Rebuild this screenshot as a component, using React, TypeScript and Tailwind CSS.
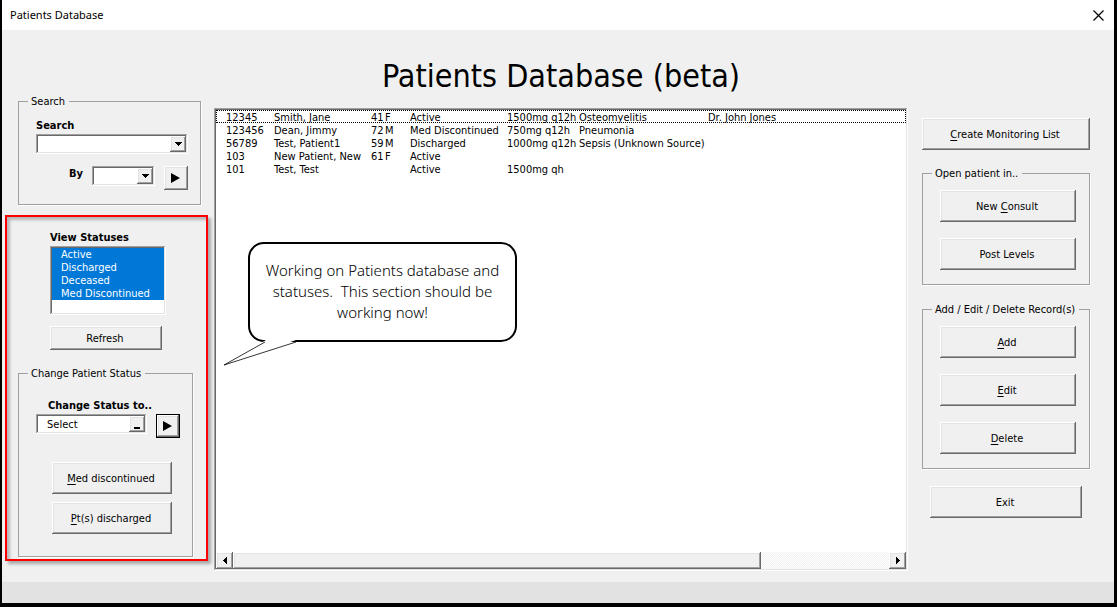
import type { ReactNode } from "react";

const raised =
  "bg-[#f0f0f0] shadow-[inset_-1px_-1px_0_#696969,inset_1px_1px_0_#fff,inset_-2px_-2px_0_#a0a0a0,inset_2px_2px_0_#e3e3e3]";
const sunken =
  "bg-white p-[2px] shadow-[inset_-1px_-1px_0_#fff,inset_1px_1px_0_#a0a0a0,inset_-2px_-2px_0_#e3e3e3,inset_2px_2px_0_#696969]";

function Key({ children }: { children: ReactNode }) {
  return <span className="underline underline-offset-2">{children}</span>;
}

function Button({ children, className = "h-8 w-full" }: { children: ReactNode; className?: string }) {
  return (
    <button type="button" className={`block pt-[2px] pr-[2px] text-center ${raised} ${className}`}>
      {children}
    </button>
  );
}

function Group({ title, className, children }: { title: string; className: string; children: ReactNode }) {
  return (
    <fieldset className={`min-w-0 border border-[#a0a0a0] pl-[17px] shadow-[1px_1px_0_#fff] ${className}`}>
      <legend className="-ml-2 h-[14px] whitespace-nowrap bg-[#f0f0f0] pr-1 pl-[3px] leading-4">{title}</legend>
      {children}
    </fieldset>
  );
}

function DownArrow() {
  return (
    <svg width="7" height="4" viewBox="0 0 7 4" shapeRendering="crispEdges" aria-hidden="true">
      <path d="M0 0h7v1H6v1H5v1H4v1H3V3H2V2H1V1H0z" />
    </svg>
  );
}

function PlayButton({ label, isDefault = false }: { label: string; isDefault?: boolean }) {
  return (
    <div className={`size-6 shrink-0 ${isDefault ? "bg-black p-px" : ""}`}>
      <button type="button" aria-label={label} className={`flex size-full items-center justify-center ${raised}`}>
        <svg width="10" height="10" viewBox="0 0 10 10" aria-hidden="true">
          <path d="M0 0L9 5L0 10z" />
        </svg>
      </button>
    </div>
  );
}

function ScrollArrow({ direction }: { direction: "left" | "right" }) {
  return (
    <button
      type="button"
      aria-label={`Scroll ${direction}`}
      className={`flex w-[17px] shrink-0 items-center justify-center ${raised}`}
    >
      <svg width="4" height="7" viewBox="0 0 4 7" shapeRendering="crispEdges" aria-hidden="true">
        <path d={direction === "left" ? "M4 0v7H3V6H2V5H1V4H0V3H1V2H2V1H3V0z" : "M0 0v7H1V6H2V5H3V4H4V3H3V2H2V1H1V0z"} />
      </svg>
    </button>
  );
}

const patients = [
  ["12345", "Smith, Jane", "41", "F", "Active", "1500mg q12h", "Osteomyelitis", "Dr. John Jones"],
  ["123456", "Dean, Jimmy", "72", "M", "Med Discontinued", "750mg q12h", "Pneumonia", ""],
  ["56789", "Test, Patient1", "59", "M", "Discharged", "1000mg q12h", "Sepsis (Unknown Source)", ""],
  ["103", "New Patient, New", "61", "F", "Active", "", "", ""],
  ["101", "Test, Test", "", "", "Active", "1500mg qh", "", ""],
];

const statuses = ["Active", "Discharged", "Deceased", "Med Discontinued"];

function SearchPanel() {
  return (
    <Group title="Search" className="mr-[11px] ml-4 pt-[10px] pb-[14px]">
      <label htmlFor="search" className="block font-bold leading-4">
        Search
      </label>
      <div className={`mr-3 flex h-5 ${sunken}`}>
        <input id="search" className="min-w-0 flex-1 px-1 outline-none" />
        <button type="button" aria-label="Show searches" className={`flex w-4 items-center justify-center ${raised}`}>
          <DownArrow />
        </button>
      </div>
      <div className="mt-3 mr-3 flex items-start justify-end">
        <label htmlFor="by" className="mr-[9px] font-bold leading-4">
          By
        </label>
        <div className={`mr-[9px] flex h-5 w-[63px] ${sunken}`}>
          <input id="by" className="min-w-0 flex-1 px-1 outline-none" />
          <button type="button" aria-label="Show fields" className={`flex w-4 items-center justify-center ${raised}`}>
            <DownArrow />
          </button>
        </div>
        <PlayButton label="Run search" />
      </div>
    </Group>
  );
}

function StatusPanel() {
  return (
    <section className="mt-[10px] mr-1 ml-[3px] border-2 border-[#f00] pt-[13px] pb-[2px] shadow-[3px_3px_3px_#a8a8a8,inset_3px_3px_3px_#b8b8b8]">
      <div className="mr-10 ml-[43px]">
        <label htmlFor="statuses" className="block font-bold leading-4">
          View Statuses
        </label>
        <div className={`h-[69px] w-[116px] ${sunken}`}>
          <select
            id="statuses"
            multiple
            defaultValue={statuses}
            className="block size-full appearance-none overflow-hidden outline-none"
          >
            {statuses.map((s) => (
              <option
                key={s}
                className="h-[13px] min-h-0 bg-[linear-gradient(#0078d7,#0078d7)] p-0 pl-[9px] leading-[15px] [-webkit-text-fill-color:#fff]"
              >
                {s}
              </option>
            ))}
          </select>
        </div>
        <Button className="mt-[11px] h-6 w-28">Refresh</Button>
      </div>
      <Group title="Change Patient Status" className="mt-4 mr-[13px] ml-[11px] pt-[18px] pb-[22px]">
        <label htmlFor="change" className="ml-3 block font-bold leading-4">
          Change Status to..
        </label>
        <div className="mr-3 flex items-start gap-[9px]">
          <div className={`flex h-5 min-w-0 flex-1 ${sunken}`}>
            <select id="change" className="min-w-0 flex-1 appearance-none pt-[2px] pl-[9px] outline-none">
              <option>Select</option>
            </select>
            <span className={`flex w-4 items-end justify-center pb-[3px] ${raised}`}>
              <span className="h-[2px] w-[6px] bg-black" />
            </span>
          </div>
          <PlayButton label="Apply status" isDefault />
        </div>
        <div className="mt-6 mr-5 ml-4 flex flex-col gap-2">
          <Button>
            <Key>M</Key>ed discontinued
          </Button>
          <Button>
            <Key>P</Key>t(s) discharged
          </Button>
        </div>
      </Group>
    </section>
  );
}

function Callout() {
  return (
    <div className="absolute top-[134px] left-[34px] flex h-[100px] w-[269px] items-center justify-center rounded-2xl border-2 border-black bg-white pb-[2px]">
      <p className="text-center font-['Noto_Sans','Open_Sans',sans-serif] text-[15px] leading-[21px] font-light whitespace-pre">
        {"Working on Patients database and\nstatuses.  This section should be\nworking now!"}
      </p>
      <svg className="absolute top-[95px] -left-[27px]" width="76" height="28" viewBox="0 0 76 28" aria-hidden="true">
        <path d="M43 1L1 26L73 1z" fill="#fff" />
        <path d="M42 3L1 26L73 3" fill="none" stroke="#000" strokeWidth="0.8" />
      </svg>
    </div>
  );
}

function PatientList() {
  return (
    <div className={`relative flex flex-1 flex-col ${sunken}`}>
      <table className="w-full table-fixed border-collapse leading-[15px]">
        <colgroup>
          <col className="w-[58px]" />
          <col className="w-[97px]" />
          <col className="w-[14px]" />
          <col className="w-[25px]" />
          <col className="w-[97px]" />
          <col className="w-[72px]" />
          <col className="w-[129px]" />
          <col />
        </colgroup>
        <tbody>
          {patients.map((row, r) => (
            <tr key={row[0]} className={r === 0 ? "outline-1 -outline-offset-1 outline-black outline-dotted" : ""}>
              {row.map((cell, c) => (
                <td key={c} className={c === 0 ? "p-0 pl-[10px]" : "p-0"}>
                  <div className="h-[13px] whitespace-nowrap">{cell}</div>
                </td>
              ))}
            </tr>
          ))}
        </tbody>
      </table>
      <div className="mt-auto flex h-[17px] bg-[repeating-conic-gradient(#f0f0f0_0_25%,#fff_0_50%)] bg-[length:2px_2px]">
        <ScrollArrow direction="left" />
        <div className="flex flex-1">
          <div className={`w-[80.5%] ${raised}`} />
        </div>
        <ScrollArrow direction="right" />
      </div>
      <Callout />
    </div>
  );
}

function Actions() {
  return (
    <div className="pt-[88px] pr-6 pl-[14px]">
      <Button>
        <Key>C</Key>reate Monitoring List
      </Button>
      <Group title="Open patient in.." className="mt-4 pt-[10px] pr-[13px] pb-[14px]">
        <div className="flex flex-col gap-4">
          <Button>
            New <Key>C</Key>onsult
          </Button>
          <Button>Post Levels</Button>
        </div>
      </Group>
      <Group title="Add / Edit / Delete Record(s)" className="mt-[17px] pt-[10px] pr-[13px] pb-[14px]">
        <div className="flex flex-col gap-4">
          <Button>
            <Key>A</Key>dd
          </Button>
          <Button>
            <Key>E</Key>dit
          </Button>
          <Button>
            <Key>D</Key>elete
          </Button>
        </div>
      </Group>
      <div className="mx-2 mt-[17px]">
        <Button>Exit</Button>
      </div>
    </div>
  );
}

export default function App() {
  return (
    <div className="flex min-h-screen flex-col border-r-[3px] border-b-4 border-l-2 border-black bg-[#f0f0f0] font-['DejaVu_Sans_Condensed','DejaVu_Sans',sans-serif] text-[11px] leading-[14px] text-black">
      <header className="flex h-[30px] items-center justify-between bg-white pr-[10px] pl-2">
        <span className="font-['Noto_Sans',sans-serif]">Patients Database</span>
        <button type="button" aria-label="Close" className="flex size-[11px] items-center justify-center">
          <svg width="11" height="11" viewBox="0 0 11 11" fill="none" stroke="#000" strokeWidth="1.2" aria-hidden="true">
            <path d="M0.500 0.500L10.500 10.500M10.500 0.500L0.500 10.500" />
          </svg>
        </button>
      </header>
      <main className="grid flex-1 grid-cols-[210px_minmax(0,1fr)_206px]">
        <div className="pt-16 pb-5">
          <SearchPanel />
          <StatusPanel />
        </div>
        <div className="flex flex-col pb-[11px] pl-[2px]">
          <h1 className="pt-[26px] pb-3 text-center text-[32px] leading-10">Patients Database (beta)</h1>
          <PatientList />
        </div>
        <Actions />
      </main>
      <footer className="h-[21px] bg-[#e2e2e2]" />
    </div>
  );
}
